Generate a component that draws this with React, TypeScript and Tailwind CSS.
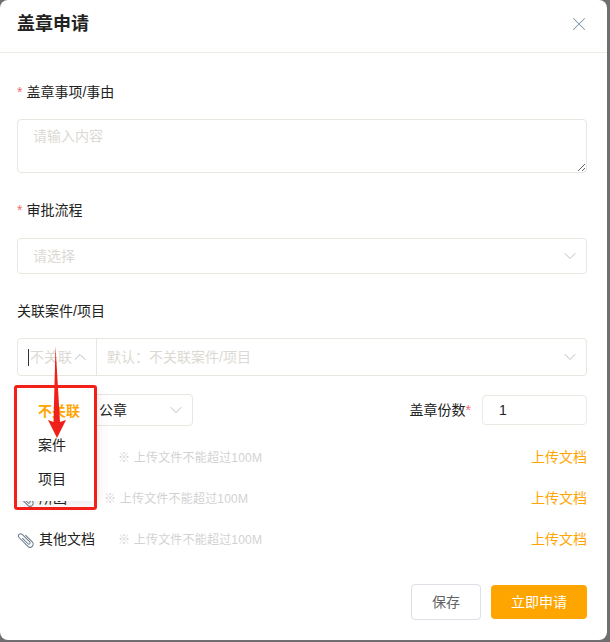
import { ChevronDown, ChevronUp, X } from "lucide-react";

function Star() {
  return <span className="text-[#f56c6c] mr-[4px]">*</span>;
}

function Clip() {
  return (
    <svg width="16" height="16" viewBox="0 0 18 18" fill="none" className="shrink-0 ml-[1px] mr-[5px] overflow-visible">
      <g transform="rotate(-45 9 9)">
        <path
          d="M12.5 5V15.5a3.5 3.5 0 0 1-7 0V1.5a2.5 2.5 0 0 1 5 0V13.5a1.5 1.5 0 0 1-3 0V5"
          stroke="#67798c"
          strokeWidth="1.1"
          strokeLinecap="round"
        />
      </g>
    </svg>
  );
}

function DocRow({ label }: { label: string }) {
  return (
    <div className="flex items-center h-[41px] text-[14px]">
      <Clip />
      <span className={"text-[#222] " + (label === "所函" ? "w-[42px]" : "w-[56px]")}>{label}</span>
      <span className="ml-[23px] text-[12px] tracking-[0.2px] text-[#d2d2d2]">※ 上传文件不能超过100M</span>
      <span className="ml-auto text-[#ffa500]">上传文档</span>
    </div>
  );
}

export default function App() {
  return (
    <div
      className="relative w-[610px] h-[642px] bg-[#6e6e6e] overflow-hidden"
      style={{ fontFamily: '"Liberation Sans","Noto Sans CJK SC",sans-serif' }}
    >
      <div className="w-[607px] h-[640px] bg-white rounded-[8px] flex flex-col">
        <div className="h-[53px] shrink-0 border-b border-[#eeebe5] pl-[17px] pr-[17px] flex items-center justify-between">
          <span className="text-[18px] font-bold text-[#222] leading-[24px] -mt-[5px]">盖章申请</span>
          <X size={22} strokeWidth={1.1} className="text-[#7b98a6] -mt-[5px]" />
        </div>

        <div className="flex flex-col pl-[17px] pr-[20px] pt-[29px] text-[14px] text-[#222]">
          <div className="h-[20px] leading-[20px] flex items-center"><Star />盖章事项/事由</div>
          <textarea
            placeholder="请输入内容"
            className="mt-[17px] w-full h-[54px] border border-[#e9e6df] rounded-[4px] px-[15px] py-[6px] text-[14px] leading-[20px] placeholder:text-[#dcd9d3] outline-none block"
          />

          <div className="mt-[27px] h-[20px] leading-[20px] flex items-center"><Star />审批流程</div>
          <div className="mt-[18px] h-[36px] border border-[#e9e6df] rounded-[4px] pl-[15px] pr-[6px] flex items-center justify-between text-[#dcd9d3]">
            <span>请选择</span>
            <ChevronDown size={20} strokeWidth={1} className="text-[#a9b2b8]" />
          </div>

          <div className="mt-[27px] h-[20px] leading-[20px]">关联案件/项目</div>
          <div className="mt-[17px] h-[38px] border border-[#e9e6df] rounded-[4px] flex items-center text-[#dcd9d3]">
            <div className="w-[79px] h-full shrink-0 border-r border-[#e9e6df] flex items-center pl-[10px]">
              <span className="w-[1px] h-[17px] bg-[#333] mr-[1px]" />
              <span>不关联</span>
              <ChevronUp size={20} strokeWidth={1} className="-ml-[2px] text-[#a9b2b8]" />
            </div>
            <span className="pl-[10px] pt-[1px]">默认：不关联案件/项目</span>
            <ChevronDown size={20} strokeWidth={1} className="ml-auto mr-[6px] text-[#a9b2b8]" />
          </div>

          <div className="mt-[18px] h-[32px] flex items-center">
            <span className="w-[66px] shrink-0"><Star />印章类型</span>
            <div className="w-[110px] h-full border border-[#e9e6df] rounded-[4px] pl-[15px] pr-[6px] flex items-center justify-between">
              <span>公章</span>
              <ChevronDown size={20} strokeWidth={1} className="text-[#a9b2b8]" />
            </div>
            <span className="ml-auto">盖章份数<span className="text-[#f56c6c]">*</span></span>
            <div className="ml-[11px] w-[105px] h-[30px] border border-[#ece8e2] rounded-[4px] pl-[16px] flex items-center text-[#222]">1</div>
          </div>

          <div className="mt-[11px] flex flex-col">
            <DocRow label="盖章文档" />
            <DocRow label="所函" />
            <DocRow label="其他文档" />
          </div>

          <div className="mt-[24px] flex justify-end items-center gap-[10px]">
            <div className="w-[70px] h-[36px] border border-[#dcdfe6] rounded-[4px] flex items-center justify-center text-[#606266]">保存</div>
            <div className="w-[96px] h-[34px] bg-[#ffa500] rounded-[4px] flex items-center justify-center text-white">立即申请</div>
          </div>
        </div>
      </div>

      <div className="absolute left-[17px] top-[388px] w-[80px] h-[113px] bg-white py-[6px] shadow-[0_2px_12px_rgba(0,0,0,0.1)] text-[14px]">
        <div className="h-[34px] pl-[21px] flex items-center font-bold text-[#ffa500]">不关联</div>
        <div className="h-[34px] pl-[21px] flex items-center text-[#222]">案件</div>
        <div className="h-[34px] pl-[21px] flex items-center text-[#222]">项目</div>
      </div>
      <div className="absolute left-[14px] top-[385px] w-[83px] h-[125px] border-[3px] border-[#f3201a] rounded-[3px]" />
      <svg className="absolute left-[40px] top-[340px]" width="40" height="105" viewBox="40 340 40 105">
        <polygon points="55.5,346 60,422 66,420 57,438 48,420 53.5,422" fill="#ee2019" />
      </svg>
    </div>
  );
}
